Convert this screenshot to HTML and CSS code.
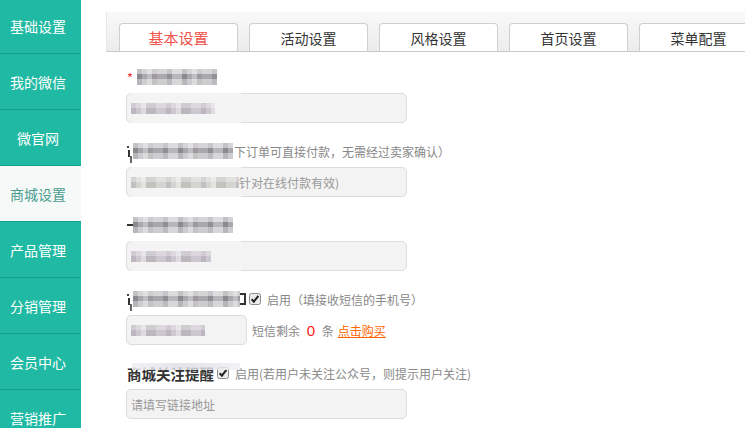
FILE: index.html
```html
<!DOCTYPE html>
<html lang="zh-CN">
<head>
<meta charset="utf-8">
<title>商城设置</title>
<link rel="stylesheet" href="styles.css">
</head>
<body>
<div class="app">
  <nav class="side">
    <a class="side-item">基础设置</a>
    <a class="side-item">我的微信</a>
    <a class="side-item">微官网</a>
    <a class="side-item active">商城设置</a>
    <a class="side-item">产品管理</a>
    <a class="side-item">分销管理</a>
    <a class="side-item">会员中心</a>
    <a class="side-item">营销推广</a>
  </nav>
  <main class="main">
    <div class="tabs">
      <a class="tab active">基本设置</a>
      <a class="tab">活动设置</a>
      <a class="tab">风格设置</a>
      <a class="tab">首页设置</a>
      <a class="tab">菜单配置</a>
    </div>
    <form class="form">
      <div class="row">
        <div class="label"><span class="req">*</span><span class="mz w80"></span></div>
        <div class="input"><span class="patch"></span><span class="mz-in w84"></span></div>
      </div>
      <div class="row">
        <div class="label"><span class="stub stub-i"></span><span class="mz w100"></span><span class="hint">下订单可直接付款<span class="fw">，</span>无需经过卖家确认<span class="fw">）</span></span></div>
        <div class="input"><span class="patch"></span><span class="mz-in w108 pale"></span><span class="ph">针对在线付款有效)</span></div>
      </div>
      <div class="row">
        <div class="label"><span class="stub stub-dash"></span><span class="mz w100"></span></div>
        <div class="input"><span class="patch"></span><span class="mz-in w80"></span></div>
      </div>
      <div class="row">
        <div class="label"><span class="stub stub-i"></span><span class="mz w107"></span><span class="stub stub-box"></span>
          <svg class="cb" width="12" height="12" viewBox="0 0 12 12"><rect x="0.5" y="0.5" width="11" height="11" rx="2" fill="#ececec" stroke="#8c8c8c"/><path d="M2.6 6.2 L4.9 8.6 L9.4 2.8" fill="none" stroke="#222" stroke-width="2"/></svg>
          <span class="hint">启用<span class="fw">（</span>填接收短信的手机号<span class="fw">）</span></span></div>
        <div class="line">
          <div class="input small"><span class="mz-in w74"></span></div>
          <span class="hint">短信剩余 <em class="num">0</em> 条</span>
          <a class="buy">点击购买</a>
        </div>
      </div>
      <div class="row">
        <div class="label"><b class="dark">商城关注提醒</b><span class="veil"></span>
          <svg class="cb" width="12" height="12" viewBox="0 0 12 12"><rect x="0.5" y="0.5" width="11" height="11" rx="2" fill="#ececec" stroke="#8c8c8c"/><path d="M2.6 6.2 L4.9 8.6 L9.4 2.8" fill="none" stroke="#222" stroke-width="2"/></svg>
          <span class="hint">启用(若用户未关注公众号<span class="fw">，</span>则提示用户关注)</span></div>
        <div class="input"><span class="ph">请填写链接地址</span></div>
      </div>
    </form>
  </main>
</div>
</body>
</html>
```
FILE: styles.css
```css
* { box-sizing: border-box; }
html, body { margin: 0; padding: 0; }
body {
  width: 745px;
  height: 428px;
  overflow: hidden;
  background: #fff;
  font-family: "Noto Sans CJK SC", "Noto Sans", sans-serif;
  color: #333;
}
.app { display: flex; height: 428px; overflow: hidden; }

/* sidebar */
.side {
  width: 81px;
  flex: none;
  margin-top: -2px;
  background: #20b9a3;
  display: flex;
  flex-direction: column;
}
.side-item {
  height: 56px;
  flex: none;
  display: flex;
  align-items: center;
  justify-content: center;
  padding-right: 5px;
  border-bottom: 1px solid #16a08c;
  color: #fff;
  font-size: 14px;
  line-height: 1;
}
.side-item.active {
  background: #f5f9f8;
  color: #4a9c8f;
}

/* main */
.main {
  flex: 1;
  min-width: 0;
  padding: 12px 0 0 25px;
}
.tabs {
  display: flex;
  gap: 11px;
  height: 40px;
  padding: 11px 0 0 12px;
  background: linear-gradient(#f9f9f9, #ececec);
  border-bottom: 1px solid #c8c8c8;
  border-left: 1px solid #e4e8ee;
  overflow: hidden;
}
.tab {
  flex: none;
  width: 119px;
  height: 28px;
  background: #fff;
  border: 1px solid #cfcfcf;
  border-bottom: none;
  border-radius: 4px 4px 0 0;
  display: flex;
  align-items: center;
  justify-content: center;
  font-size: 14px;
  color: #333;
}
.tab.active { color: #f0524c; font-size: 15px; }

/* form */
.form { padding: 15px 0 0 20px; }
.row { margin-bottom: 18px; }
.label {
  position: relative;
  height: 20px;
  margin-bottom: 6px;
  padding-left: 1px;
  display: flex;
  align-items: center;
  font-size: 14px;
  white-space: nowrap;
}
.req { color: #f33; font-size: 13px; margin-right: 4px; line-height: 1; }
.dark { color: #333; font-weight: bold; font-size: 14.5px; }

/* partial glyph edges peeking out from the blurred areas */
.stub { display: inline-block; flex: none; position: relative; }
.stub-i { width: 6px; height: 14px; }
.stub-i::before {
  content: ""; position: absolute; left: 0; top: 2px; width: 2px; height: 2px; background: #444;
}
.stub-i::after {
  content: ""; position: absolute; left: 1px; top: 6px; width: 2px; height: 7px; background: #333;
  box-shadow: 2px 6px 0 -0px #666;
}
.stub-dash { width: 6px; height: 14px; }
.stub-dash::before {
  content: ""; position: absolute; left: 0; top: 6px; width: 6px; height: 2px; background: #333;
}
.stub-box { width: 6px; height: 12px; border: 2px solid #333; border-left: none; }

.hint { color: #888; font-size: 12px; }
.fw { display: inline-block; width: 12px; text-align: center; }
.label .hint { margin-left: 1px; }
.cb { flex: none; margin: 0 5px 0 3px; }
.veil {
  position: absolute;
  left: 6px;
  top: 0;
  width: 108px;
  height: 7px;
  background: linear-gradient(90deg, rgba(240,240,244,.85), rgba(220,220,226,.8) 50%, rgba(240,240,244,.85));
}

.input {
  position: relative;
  width: 281px;
  height: 30px;
  background: #f3f3f3;
  border: 1px solid #dcdcdc;
  border-radius: 5px;
  display: flex;
  align-items: center;
  padding-left: 4px;
  font-size: 12px;
}
.input.small { width: 121px; }
.patch {
  position: absolute;
  left: 4px;
  top: -5px;
  bottom: -5px;
  width: 110px;
  background: linear-gradient(#fff 0 4px, #f4f4f4 4px calc(100% - 4px), #fff calc(100% - 4px));
}
.ph { color: #999; font-size: 12px; position: relative; }
.line { display: flex; align-items: center; gap: 4px; }
.line .hint { margin-left: 1px; }
.num { font-style: normal; color: #f22; font-size: 15px; font-family: "Liberation Sans", sans-serif; margin: 0 4px 0 4px; }
.buy { color: #f60; font-size: 12px; text-decoration: underline; }

/* mosaic placeholders for blurred content */
.mz, .mz-in { display: inline-block; position: relative; flex: none; }
.mz {
  height: 16px;
  background-color: #b2b2b6;
  background-image:
    linear-gradient(to bottom, rgba(255,255,255,.45) 0 5px, rgba(0,0,0,.05) 5px 10px, rgba(255,255,255,.35) 10px),
    repeating-linear-gradient(90deg, rgba(60,60,70,.28) 0 5px, transparent 5px 10px, rgba(255,255,255,.3) 10px 15px, rgba(110,90,90,.18) 15px 20px, transparent 20px 30px, rgba(40,50,60,.2) 30px 35px, rgba(255,255,255,.2) 35px 45px);
}
.mz-in {
  height: 11px;
  background-color: #cdc7cf;
  background-image:
    linear-gradient(to bottom, rgba(255,255,255,.3) 0 5px, transparent 5px),
    repeating-linear-gradient(90deg, rgba(120,100,130,.18) 0 5px, transparent 5px 10px, rgba(255,255,255,.35) 10px 15px, rgba(90,90,90,.15) 15px 25px, transparent 25px 35px);
}
.mz-in.pale { background-color: #d4d4d0; }
.w74 { width: 74px; }
.w80 { width: 80px; }
.w84 { width: 84px; }
.w100 { width: 100px; }
.w107 { width: 107px; }
.w108 { width: 108px; }
```
